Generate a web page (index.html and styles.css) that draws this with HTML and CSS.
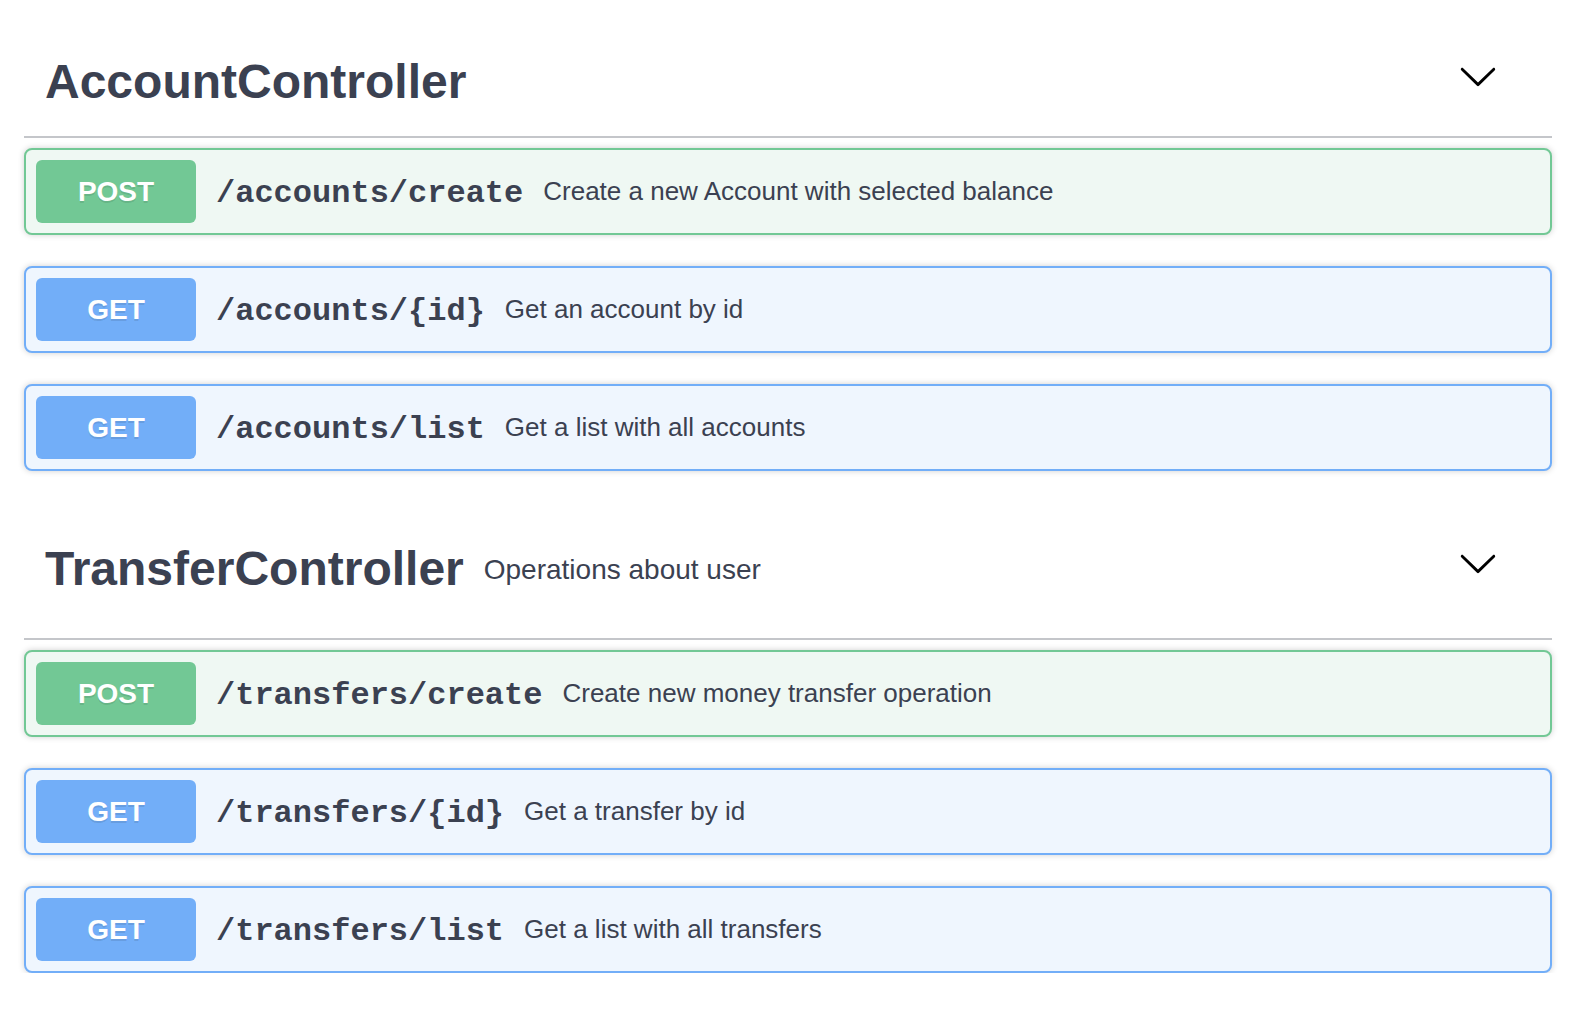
FILE: index.html
```html
<!DOCTYPE html>
<html lang="en">
<head>
<meta charset="utf-8">
<title>API</title>
<link rel="stylesheet" href="styles.css">
</head>
<body>
<div class="page">
  <section class="tag-section">
    <h4 class="tag-header">
      <span class="tag-name">AccountController</span>
      <button class="expand" aria-label="Collapse">
        <svg width="40" height="40" viewBox="0 0 20 20" aria-hidden="true"><path d="M17.418 6.109c.272-.268.709-.268.979 0s.271.701 0 .969l-7.908 7.83c-.27.268-.707.268-.979 0l-7.908-7.83c-.27-.268-.27-.701 0-.969.271-.268.709-.268.979 0L10 13.250l7.418-7.141z"/></svg>
      </button>
    </h4>
    <div class="ops">
      <div class="op op-post"><span class="method">POST</span><span class="path">/accounts/create</span><span class="desc">Create a new Account with selected balance</span></div>
      <div class="op op-get"><span class="method">GET</span><span class="path">/accounts/{id}</span><span class="desc">Get an account by id</span></div>
      <div class="op op-get"><span class="method">GET</span><span class="path">/accounts/list</span><span class="desc">Get a list with all accounts</span></div>
    </div>
  </section>
  <section class="tag-section">
    <h4 class="tag-header">
      <span class="tag-name">TransferController</span>
      <small class="tag-desc">Operations about user</small>
      <button class="expand" aria-label="Collapse">
        <svg width="40" height="40" viewBox="0 0 20 20" aria-hidden="true"><path d="M17.418 6.109c.272-.268.709-.268.979 0s.271.701 0 .969l-7.908 7.83c-.27.268-.707.268-.979 0l-7.908-7.83c-.27-.268-.27-.701 0-.969.271-.268.709-.268.979 0L10 13.250l7.418-7.141z"/></svg>
      </button>
    </h4>
    <div class="ops">
      <div class="op op-post"><span class="method">POST</span><span class="path">/transfers/create</span><span class="desc">Create new money transfer operation</span></div>
      <div class="op op-get"><span class="method">GET</span><span class="path">/transfers/{id}</span><span class="desc">Get a transfer by id</span></div>
      <div class="op op-get"><span class="method">GET</span><span class="path">/transfers/list</span><span class="desc">Get a list with all transfers</span></div>
    </div>
  </section>
</div>
</body>
</html>
```

FILE: styles.css
```css
html, body {
  margin: 0;
  padding: 0;
  background: #ffffff;
}

body {
  font-family: "Liberation Sans", Arial, sans-serif;
  color: #3b4151;
}

.page {
  padding: 0 24px;
}

.tag-section + .tag-section {
  margin-top: 16px;
}

.tag-header {
  display: flex;
  align-items: flex-start;
  margin: 0 0 10px;
  padding: 56px 54px 30px 21px;
  border-bottom: 2px solid rgba(59, 65, 81, 0.3);
  font-weight: 700;
}

.tag-name {
  margin-top: 2px;
  font-size: 48px;
  line-height: 48px;
  font-weight: 700;
  color: #3b4151;
}

.tag-desc {
  margin: 13px 0 24px 20px;
  font-size: 28px;
  line-height: 28px;
  font-weight: 400;
  color: #3b4151;
}

.expand {
  margin-left: auto;
  padding: 0;
  border: none;
  background: none;
  width: 40px;
  height: 40px;
  display: block;
}

.expand svg {
  display: block;
  fill: #000000;
}

.ops {
  display: flex;
  flex-direction: column;
  gap: 31px;
}

.op {
  display: flex;
  align-items: center;
  padding: 10px;
  border: 2px solid;
  border-radius: 8px;
  box-shadow: 0 0 6px rgba(0, 0, 0, 0.19);
}

.op-post {
  border-color: #72c895;
  background: #eff8f3;
}

.op-get {
  border-color: #72aef8;
  background: #eff6fe;
}

.method {
  flex: none;
  width: 160px;
  height: 63px;
  display: flex;
  align-items: center;
  justify-content: center;
  border-radius: 6px;
  font-size: 28px;
  font-weight: 700;
  color: #ffffff;
  text-shadow: 0 2px 0 rgba(0, 0, 0, 0.1);
}

.op-post .method {
  background: #72c895;
}

.op-get .method {
  background: #72aef8;
}

.path {
  margin: 0 20px;
  padding-top: 4px;
  font-family: "Liberation Mono", "Courier New", monospace;
  font-size: 32px;
  font-weight: 700;
  color: #3b4151;
}

.desc {
  font-size: 26px;
  color: #3b4151;
}
```
